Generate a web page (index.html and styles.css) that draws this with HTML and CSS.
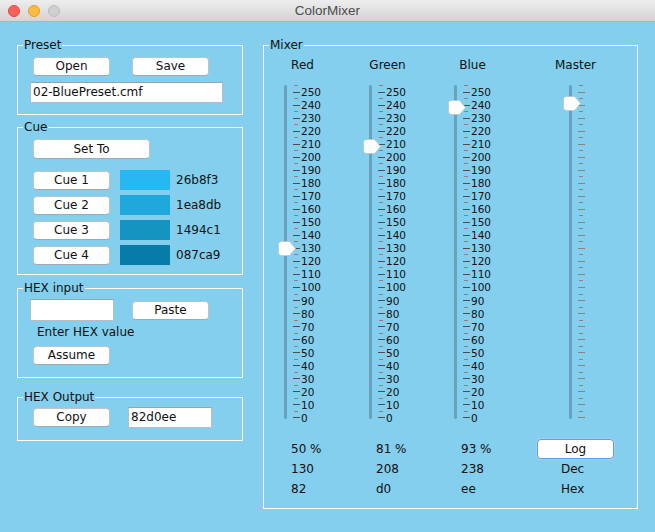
FILE: index.html
```html
<!DOCTYPE html>
<html lang="en">
<head>
<meta charset="utf-8">
<title>ColorMixer</title>
<link rel="stylesheet" href="styles.css">
</head>
<body>
<header class="titlebar">
  <div class="lights">
    <span class="light red"></span>
    <span class="light yellow"></span>
    <span class="light gray"></span>
  </div>
  <div class="title">ColorMixer</div>
  <div></div>
</header>

<main class="content">
  <div class="left">
    <section class="group preset">
      <span class="group-title">Preset</span>
      <div class="btn-row">
        <button class="btn">Open</button>
        <button class="btn">Save</button>
      </div>
      <div class="field preset-field">02-BluePreset.cmf</div>
    </section>

    <section class="group cue">
      <span class="group-title">Cue</span>
      <button class="btn btn-wide">Set To</button>
      <div class="cue-list">
        <div class="cue-row"><button class="btn">Cue 1</button><span class="swatch c1"></span><span class="hex">26b8f3</span></div>
        <div class="cue-row"><button class="btn">Cue 2</button><span class="swatch c2"></span><span class="hex">1ea8db</span></div>
        <div class="cue-row"><button class="btn">Cue 3</button><span class="swatch c3"></span><span class="hex">1494c1</span></div>
        <div class="cue-row"><button class="btn">Cue 4</button><span class="swatch c4"></span><span class="hex">087ca9</span></div>
      </div>
    </section>

    <section class="group hex-in">
      <span class="group-title">HEX input</span>
      <div class="in-row">
        <div class="field small-field"></div>
        <button class="btn">Paste</button>
      </div>
      <div class="hint">Enter HEX value</div>
      <button class="btn assume">Assume</button>
    </section>

    <section class="group hex-out">
      <span class="group-title">HEX Output</span>
      <div class="out-row">
        <button class="btn">Copy</button>
        <div class="field out-field">82d0ee</div>
      </div>
    </section>
  </div>

  <section class="group mixer">
    <span class="group-title">Mixer</span>
    <div class="channels">

      <div class="channel">
        <div class="ch-name">Red</div>
        <div class="slider">
          <div class="track"></div>
          <div class="scale">
            <i></i><i class="M"><b>250</b></i>
            <i></i><i class="M"><b>240</b></i>
            <i></i><i class="M"><b>230</b></i>
            <i></i><i class="M"><b>220</b></i>
            <i></i><i class="M"><b>210</b></i>
            <i></i><i class="M"><b>200</b></i>
            <i></i><i class="M"><b>190</b></i>
            <i></i><i class="M"><b>180</b></i>
            <i></i><i class="M"><b>170</b></i>
            <i></i><i class="M"><b>160</b></i>
            <i></i><i class="M"><b>150</b></i>
            <i></i><i class="M"><b>140</b></i>
            <i></i><i class="M"><b>130</b></i>
            <i></i><i class="M"><b>120</b></i>
            <i></i><i class="M"><b>110</b></i>
            <i></i><i class="M"><b>100</b></i>
            <i></i><i class="M"><b>90</b></i>
            <i></i><i class="M"><b>80</b></i>
            <i></i><i class="M"><b>70</b></i>
            <i></i><i class="M"><b>60</b></i>
            <i></i><i class="M"><b>50</b></i>
            <i></i><i class="M"><b>40</b></i>
            <i></i><i class="M"><b>30</b></i>
            <i></i><i class="M"><b>20</b></i>
            <i></i><i class="M"><b>10</b></i>
            <i></i><i class="M"><b>0</b></i>
          </div>
          <svg class="thumb" style="top:156.2px" width="18" height="15" viewBox="0 0 18 15"><path d="M3.5 0.5H11.5L17.5 7.5L11.5 14.5H3.5Q0.5 14.5 0.5 11.5V3.5Q0.5 0.5 3.5 0.5Z"/></svg>
        </div>
        <div class="values">
          <div>50 %</div>
          <div>130</div>
          <div>82</div>
        </div>
      </div>

      <div class="channel">
        <div class="ch-name">Green</div>
        <div class="slider">
          <div class="track"></div>
          <div class="scale">
            <i></i><i class="M"><b>250</b></i>
            <i></i><i class="M"><b>240</b></i>
            <i></i><i class="M"><b>230</b></i>
            <i></i><i class="M"><b>220</b></i>
            <i></i><i class="M"><b>210</b></i>
            <i></i><i class="M"><b>200</b></i>
            <i></i><i class="M"><b>190</b></i>
            <i></i><i class="M"><b>180</b></i>
            <i></i><i class="M"><b>170</b></i>
            <i></i><i class="M"><b>160</b></i>
            <i></i><i class="M"><b>150</b></i>
            <i></i><i class="M"><b>140</b></i>
            <i></i><i class="M"><b>130</b></i>
            <i></i><i class="M"><b>120</b></i>
            <i></i><i class="M"><b>110</b></i>
            <i></i><i class="M"><b>100</b></i>
            <i></i><i class="M"><b>90</b></i>
            <i></i><i class="M"><b>80</b></i>
            <i></i><i class="M"><b>70</b></i>
            <i></i><i class="M"><b>60</b></i>
            <i></i><i class="M"><b>50</b></i>
            <i></i><i class="M"><b>40</b></i>
            <i></i><i class="M"><b>30</b></i>
            <i></i><i class="M"><b>20</b></i>
            <i></i><i class="M"><b>10</b></i>
            <i></i><i class="M"><b>0</b></i>
          </div>
          <svg class="thumb" style="top:54.4px" width="18" height="15" viewBox="0 0 18 15"><path d="M3.5 0.5H11.5L17.5 7.5L11.5 14.5H3.5Q0.5 14.5 0.5 11.5V3.5Q0.5 0.5 3.5 0.5Z"/></svg>
        </div>
        <div class="values">
          <div>81 %</div>
          <div>208</div>
          <div>d0</div>
        </div>
      </div>

      <div class="channel">
        <div class="ch-name">Blue</div>
        <div class="slider">
          <div class="track"></div>
          <div class="scale">
            <i></i><i class="M"><b>250</b></i>
            <i></i><i class="M"><b>240</b></i>
            <i></i><i class="M"><b>230</b></i>
            <i></i><i class="M"><b>220</b></i>
            <i></i><i class="M"><b>210</b></i>
            <i></i><i class="M"><b>200</b></i>
            <i></i><i class="M"><b>190</b></i>
            <i></i><i class="M"><b>180</b></i>
            <i></i><i class="M"><b>170</b></i>
            <i></i><i class="M"><b>160</b></i>
            <i></i><i class="M"><b>150</b></i>
            <i></i><i class="M"><b>140</b></i>
            <i></i><i class="M"><b>130</b></i>
            <i></i><i class="M"><b>120</b></i>
            <i></i><i class="M"><b>110</b></i>
            <i></i><i class="M"><b>100</b></i>
            <i></i><i class="M"><b>90</b></i>
            <i></i><i class="M"><b>80</b></i>
            <i></i><i class="M"><b>70</b></i>
            <i></i><i class="M"><b>60</b></i>
            <i></i><i class="M"><b>50</b></i>
            <i></i><i class="M"><b>40</b></i>
            <i></i><i class="M"><b>30</b></i>
            <i></i><i class="M"><b>20</b></i>
            <i></i><i class="M"><b>10</b></i>
            <i></i><i class="M"><b>0</b></i>
          </div>
          <svg class="thumb" style="top:15.2px" width="18" height="15" viewBox="0 0 18 15"><path d="M3.5 0.5H11.5L17.5 7.5L11.5 14.5H3.5Q0.5 14.5 0.5 11.5V3.5Q0.5 0.5 3.5 0.5Z"/></svg>
        </div>
        <div class="values">
          <div>93 %</div>
          <div>238</div>
          <div>ee</div>
        </div>
      </div>

      <div class="channel master">
        <div class="ch-name">Master</div>
        <div class="slider">
          <div class="track"></div>
          <div class="scale plain">
            <i></i><i class="M"></i><i></i><i class="M"></i><i></i><i class="M"></i><i></i><i class="M"></i>
            <i></i><i class="M"></i><i></i><i class="M"></i><i></i><i class="M"></i><i></i><i class="M"></i>
            <i></i><i class="M"></i><i></i><i class="M"></i><i></i><i class="M"></i><i></i><i class="M"></i>
            <i></i><i class="M"></i><i></i><i class="M"></i><i></i><i class="M"></i><i></i><i class="M"></i>
            <i></i><i class="M"></i><i></i><i class="M"></i><i></i><i class="M"></i><i></i><i class="M"></i>
            <i></i><i class="M"></i><i></i><i class="M"></i><i></i><i class="M"></i><i></i><i class="M"></i>
            <i></i><i class="M"></i><i></i><i class="M"></i>
          </div>
          <svg class="thumb" style="top:11.3px" width="18" height="15" viewBox="0 0 18 15"><path d="M3.5 0.5H11.5L17.5 7.5L11.5 14.5H3.5Q0.5 14.5 0.5 11.5V3.5Q0.5 0.5 3.5 0.5Z"/></svg>
        </div>
        <div class="values">
          <div class="log-cell"><button class="btn btn-log">Log</button></div>
          <div>Dec</div>
          <div>Hex</div>
        </div>
      </div>

    </div>
  </section>
</main>
</body>
</html>
```

FILE: styles.css
```css
* { box-sizing: border-box; }

body {
  margin: 0;
  background: #83cfed;
  font-family: "DejaVu Sans", "Noto Sans", sans-serif;
  font-size: 12px;
  color: #111;
}

/* ---------- title bar ---------- */
.titlebar {
  height: 22px;
  border-bottom: 1px solid #b3b3b3;
  background: linear-gradient(#ededed, #d4d4d4);
  display: grid;
  grid-template-columns: 1fr auto 1fr;
  align-items: center;
}
.lights { display: flex; gap: 8px; padding-left: 8px; }
.light {
  width: 12px;
  height: 12px;
  border-radius: 50%;
  border: 1px solid;
}
.light.red { background: #fc605b; border-color: #de4a44; }
.light.yellow { background: #fdbc40; border-color: #dea028; }
.light.gray { background: #d0d0d0; border-color: #bcbcbc; }
.title {
  font-family: "Liberation Sans", Arial, sans-serif;
  font-size: 13.5px;
  color: #4d4d4d;
}

/* ---------- layout ---------- */
.content {
  display: flex;
  align-items: flex-start;
  gap: 20px;
  padding: 23px 0 0 17px;
}
.left {
  width: 226px;
  display: flex;
  flex-direction: column;
}

.group {
  position: relative;
  border: 1px solid #fff;
}
.group-title {
  position: absolute;
  top: -8px;
  left: 5px;
  padding: 0 1px;
  background: #83cfed;
  line-height: 14px;
  font-size: 12px;
}

/* ---------- controls ---------- */
.btn {
  display: block;
  width: 77px;
  height: 19px;
  margin: 0;
  padding: 0;
  border: 1px solid #bac4c9;
  border-bottom-color: #9fa9ae;
  border-radius: 4px;
  background: #fff;
  font-family: inherit;
  font-size: 12px;
  line-height: 17px;
  color: #111;
  text-align: center;
}
.field {
  background: #fff;
  border: 1px solid #b5bfc3;
  border-top-color: #9aa4a8;
  padding-left: 2px;
  font-size: 12px;
  line-height: 19px;
  color: #111;
  white-space: nowrap;
}

/* Preset */
.preset { padding: 11px 0 11px 12px; }
.btn-row { display: flex; gap: 22px; margin-left: 3px; }
.preset-field { width: 193px; height: 21px; margin-top: 6px; }

/* Cue */
.cue { margin-top: 12px; padding: 11px 0 9px 15px; }
.btn-wide { width: 117px; height: 20px; line-height: 18px; }
.cue-list {
  display: flex;
  flex-direction: column;
  gap: 5px;
  margin-top: 11px;
}
.cue-row { display: flex; align-items: center; height: 20px; }
.swatch { width: 50px; height: 20px; margin-left: 10px; }
.hex { margin-left: 6px; }
.c1 { background: #26b8f3; }
.c2 { background: #1ea8db; }
.c3 { background: #1494c1; }
.c4 { background: #087ca9; }

/* HEX input */
.hex-in { margin-top: 13px; padding: 10px 0 12px 12px; }
.in-row { display: flex; align-items: center; gap: 18px; }
.small-field { width: 84px; height: 22px; }
.hint { margin: 4px 0 0 7px; line-height: 14px; }
.assume { margin: 7px 0 0 3px; }

/* HEX output */
.hex-out { margin-top: 19px; padding: 9px 0 12px 15px; }
.out-row { display: flex; align-items: center; gap: 18px; }
.out-field { width: 84px; height: 21px; }

/* ---------- mixer ---------- */
.mixer {
  width: 375px;
  height: 464px;
  padding: 12px 0 0 14px;
}
.channels {
  display: grid;
  grid-template-columns: 85px 85px 115px 1fr;
}
.channel { display: flex; flex-direction: column; }
.ch-name {
  width: 49px;
  text-align: center;
  line-height: 14px;
}
.master .ch-name { margin-left: -12px; }

.slider {
  position: relative;
  display: flex;
  height: 334px;
  margin-top: 13px;
  padding-left: 6px;
}
.track {
  width: 3px;
  height: 100%;
  background: #67a3bd;
  border-radius: 2px;
}
.scale {
  display: flex;
  flex-direction: column;
  justify-content: space-between;
  height: 100%;
  margin-left: 6px;
}
.scale > i {
  display: flex;
  align-items: center;
  height: 1px;
  font-style: normal;
}
.scale > i::before {
  content: "";
  width: 4px;
  height: 1px;
  margin-left: 1px;
  background: #8e817c;
}
.scale > i.M::before {
  width: 7px;
  margin-left: 0;
  background: #4e4e4e;
}
.scale.plain > i.M::before { background: #8e817c; }
.scale b {
  font-weight: normal;
  font-style: normal;
  font-size: 10.5px;
  line-height: 12px;
  margin-left: 1px;
  color: #111;
  white-space: nowrap;
}
.thumb {
  position: absolute;
  left: 0;
  fill: #fff;
  stroke: #b9c6cc;
  stroke-width: 0.8;
}

.values {
  margin-top: 20px;
  padding-left: 13px;
  line-height: 20px;
}
.master .values { padding-left: 0; margin-left: -2px; }
.log-cell { height: 20px; margin-left: -24px; }
.btn-log {
  width: 77px;
  height: 20px;
  line-height: 16px;
  border: 1px solid #5e9ce4;
  box-shadow: 0 0 0 1px #a9cbf0;
}
```
